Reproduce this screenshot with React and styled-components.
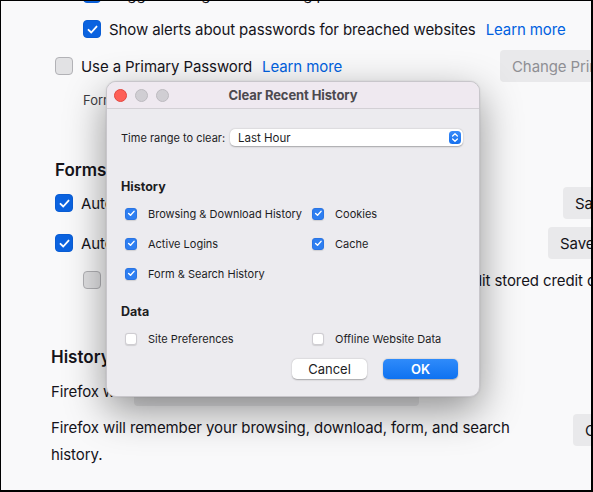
import styled, { createGlobalStyle } from "styled-components";

const GlobalStyle = createGlobalStyle`
    html, body {
        margin: 0;
        padding: 0;
        background: #ffffff;
    }
    * {
        box-sizing: border-box;
    }
`

function Check({ checked, small }) {
    const size = small ? 12 : 18
    return (
        <CheckBox $checked={checked} $size={size} $small={small}>
            {checked && (
                <svg width={size * 0.72} height={size * 0.72} viewBox="0 0 12 12">
                    <path d="M2.3 6.3 L4.9 8.8 L9.8 3.3" fill="none" stroke="#fff" strokeWidth={small ? 2 : 1.7} strokeLinecap="round" strokeLinejoin="round" />
                </svg>
            )}
        </CheckBox>
    )
}

function Stepper() {
    return (
        <StepperBox>
            <svg width="8" height="11" viewBox="0 0 8 11">
                <path d="M1.6 4 L4 1.7 L6.4 4 M1.6 7 L4 9.3 L6.4 7" fill="none" stroke="#fff" strokeWidth="1.3" strokeLinecap="round" strokeLinejoin="round" />
            </svg>
        </StepperBox>
    )
}

const historyItems = [
    ["Browsing & Download History", "Cookies"],
    ["Active Logins", "Cache"],
    ["Form & Search History", null],
]

export default function App() {
    return (
        <Page>
            <GlobalStyle />
            <Prefs>
                <PrefRow $indent={83} $top={-16}>
                    <Check checked />
                    <PrefText>Suggest and generate strong passwords</PrefText>
                </PrefRow>
                <PrefRow $indent={83} $top={17}>
                    <Check checked />
                    <PrefText>Show alerts about passwords for breached websites</PrefText>
                    <Link>Learn more</Link>
                </PrefRow>
                <PrefRow $indent={55} $top={19}>
                    <LabelGroup $width={437}>
                        <Check />
                        <PrefText>Use a Primary Password</PrefText>
                        <Link>Learn more</Link>
                    </LabelGroup>
                    <PrefButton $disabled>Change Primary Password…</PrefButton>
                </PrefRow>
                <Note>Formerly known as Master Password</Note>

                <Heading $indent={55} $top={51}>Forms and Autofill</Heading>
                <PrefRow $indent={55} $top={13}>
                    <LabelGroup $width={500}>
                        <Check checked />
                        <PrefText>Autofill logins and passwords</PrefText>
                    </LabelGroup>
                    <PrefButton>Saved Logins…</PrefButton>
                </PrefRow>
                <PrefRow $indent={55} $top={22}>
                    <LabelGroup $width={485}>
                        <Check checked />
                        <PrefText>Autofill addresses</PrefText>
                    </LabelGroup>
                    <PrefButton>Saved Addresses…</PrefButton>
                </PrefRow>
                <PrefRow $indent={83} $top={19}>
                    <Check />
                    <PrefText>Require macOS authentication to autofill, view and edit stored credit cards.</PrefText>
                </PrefRow>

                <Heading $indent={51} $top={57}>History</Heading>
                <PrefRow $indent={51} $top={8} $height={30}>
                    <LabelGroup $width={75}>
                        <PrefText>Firefox will</PrefText>
                    </LabelGroup>
                    <HistorySelect />
                </PrefRow>
                <HistoryRow>
                    <Paragraph>
                        Firefox will remember your browsing, download, form, and search history.
                    </Paragraph>
                    <PrefButton>Clear History…</PrefButton>
                </HistoryRow>
            </Prefs>

            <Dialog>
                <TitleBar>
                    <Lights>
                        <Light $color="#fe5f57" $border="#e2463f" />
                        <Light $color="#d0ced3" $border="#bcbabf" />
                        <Light $color="#d0ced3" $border="#bcbabf" />
                    </Lights>
                    <Title>Clear Recent History</Title>
                </TitleBar>
                <DialogBody>
                    <RangeRow>
                        <Label>Time range to clear:</Label>
                        <Select>
                            <span>Last Hour</span>
                            <Stepper />
                        </Select>
                    </RangeRow>

                    <GroupTitle $top={33}>History</GroupTitle>
                    <Grid>
                        {historyItems.flatMap(([left, right]) => [
                            <Item key={left}>
                                <Check checked small />
                                <span>{left}</span>
                            </Item>,
                            right ? (
                                <Item key={right}>
                                    <Check checked small />
                                    <span>{right}</span>
                                </Item>
                            ) : <div key={left + "-empty"} />,
                        ])}
                    </Grid>

                    <GroupTitle $top={24}>Data</GroupTitle>
                    <Grid>
                        <Item>
                            <Check small />
                            <span>Site Preferences</span>
                        </Item>
                        <Item>
                            <Check small />
                            <span>Offline Website Data</span>
                        </Item>
                    </Grid>

                    <Buttons>
                        <DialogButton>Cancel</DialogButton>
                        <DialogButton $primary>OK</DialogButton>
                    </Buttons>
                </DialogBody>
            </Dialog>
        </Page>
    )
}

const Page = styled.div`
    position: relative;
    width: 593px;
    height: 492px;
    overflow: hidden;
    background: #f9f9fa;
    border-top: 1px solid #000;
    border-left: 1px solid #000;
    border-right: 2px solid #000;
    border-bottom: 2px solid #000;
    font-family: Inter, "Noto Sans", sans-serif;
    color: #15141a;
`

const Prefs = styled.div`
    display: flex;
    flex-direction: column;
`

const PrefRow = styled.div`
    display: flex;
    align-items: center;
    gap: 8px;
    height: ${props => props.$height ?? 18}px;
    margin-top: ${props => props.$top}px;
    padding-left: ${props => props.$indent - 1}px;
    white-space: nowrap;
`

const LabelGroup = styled.div`
    flex: none;
    width: ${props => props.$width}px;
    display: flex;
    align-items: center;
    gap: 8px;
`

const CheckBox = styled.span`
    flex: none;
    display: flex;
    align-items: center;
    justify-content: center;
    width: ${props => props.$size}px;
    height: ${props => props.$size}px;
    border-radius: ${props => props.$small ? 3 : 4}px;
    background: ${props => props.$checked ? (props.$small ? "#2d7ef1" : "#0b63e0") : (props.$small ? "#ffffff" : "#e2e2e4")};
    border: 1px solid ${props => props.$checked ? (props.$small ? "#2a74e4" : "#0a5dd4") : (props.$small ? "#cfcdd2" : "#b2b2b6")};
    box-shadow: ${props => props.$small ? "0 0.5px 1px rgba(0,0,0,0.12)" : "none"};
`

const PrefText = styled.span`
    font-size: 15px;
    letter-spacing: -0.1px;
`

const Link = styled.span`
    font-size: 15px;
    color: #0061e0;
    margin-left: 2px;
    letter-spacing: -0.1px;
`

const PrefButton = styled.div`
    flex: none;
    height: 32px;
    display: flex;
    align-items: center;
    padding: 0 12px;
    border-radius: 4px;
    background: #e9e9eb;
    font-size: 15px;
    letter-spacing: -0.1px;
    white-space: nowrap;
    color: ${props => props.$disabled ? "#8f8f94" : "#15141a"};
`

const Note = styled.div`
    margin-top: 17px;
    padding-left: 82px;
    font-size: 13px;
    line-height: 16px;
    color: #3d3d42;
`

const Heading = styled.div`
    margin-top: ${props => props.$top}px;
    padding-left: ${props => props.$indent - 1}px;
    font-size: 17px;
    font-weight: 600;
    height: 22px;
    line-height: 22px;
`

const HistorySelect = styled.div`
    flex: none;
    width: 285px;
    height: 30px;
    border-radius: 4px;
    background: #e6e6e8;
`

const HistoryRow = styled.div`
    display: flex;
    align-items: flex-start;
    margin-top: 8px;
    padding-left: 50px;
`

const Paragraph = styled.div`
    flex: none;
    width: 522px;
    padding-right: 56px;
    font-size: 15px;
    line-height: 27px;
    letter-spacing: -0.1px;
`

const Dialog = styled.div`
    position: absolute;
    left: 105px;
    top: 80px;
    width: 374px;
    height: 316px;
    border-radius: 10px;
    background: #ecebef;
    border: 1px solid #c8c6cb;
    box-shadow: 0 14px 40px rgba(0, 0, 0, 0.42), 0 0 2px rgba(0, 0, 0, 0.12);
    overflow: hidden;
    font-family: Inter, "Noto Sans", sans-serif;
    color: #1d1d1f;
`

const TitleBar = styled.div`
    position: relative;
    height: 27px;
    display: flex;
    align-items: center;
    justify-content: center;
    background: #efe9f0;
    border-bottom: 1px solid #d3d0d5;
`

const Lights = styled.div`
    position: absolute;
    left: 7px;
    top: 7px;
    display: flex;
    gap: 8px;
`

const Light = styled.span`
    width: 13px;
    height: 13px;
    border-radius: 50%;
    background: ${props => props.$color};
    border: 0.5px solid ${props => props.$border};
`

const Title = styled.div`
    font-size: 13px;
    font-weight: 700;
    color: #4c4a4f;
    letter-spacing: -0.1px;
`

const DialogBody = styled.div`
    padding: 20px 16px 0 14px;
    font-size: 11px;
`

const RangeRow = styled.div`
    display: flex;
    align-items: center;
    gap: 7px;
    height: 17px;
`

const Label = styled.span`
    flex: none;
    width: 102px;
    white-space: nowrap;
`

const Select = styled.div`
    flex: 1;
    height: 17px;
    display: flex;
    align-items: center;
    justify-content: space-between;
    padding: 0 2px 0 8px;
    background: #fff;
    border-radius: 5px;
    box-shadow: 0 0.5px 1.5px rgba(0,0,0,0.3);
    font-size: 11.5px;
`

const StepperBox = styled.span`
    width: 12px;
    height: 13px;
    border-radius: 3.5px;
    background: linear-gradient(#3b8bf8, #1670ee);
    display: flex;
    align-items: center;
    justify-content: center;
`

const GroupTitle = styled.div`
    margin-top: ${props => props.$top}px;
    font-size: 12.5px;
    font-weight: 700;
    height: 16px;
    line-height: 16px;
`

const Grid = styled.div`
    display: grid;
    grid-template-columns: 187px 1fr;
    row-gap: 17px;
    margin-top: 12px;
    padding-left: 4px;
`

const Item = styled.div`
    display: flex;
    align-items: center;
    gap: 11px;
    height: 13px;
    white-space: nowrap;
`

const Buttons = styled.div`
    display: flex;
    justify-content: flex-end;
    gap: 16px;
    margin-top: 14px;
    padding-right: 5px;
`

const DialogButton = styled.div`
    width: 75px;
    height: 20px;
    display: flex;
    align-items: center;
    justify-content: center;
    border-radius: 5px;
    font-size: 13px;
    background: ${props => props.$primary ? "linear-gradient(#2f8bfa, #0f72f0)" : "#ffffff"};
    color: ${props => props.$primary ? "#ffffff" : "#1d1d1f"};
    font-weight: ${props => props.$primary ? 600 : 400};
    box-shadow: 0 0.5px 1.5px rgba(0,0,0,0.3);
`
